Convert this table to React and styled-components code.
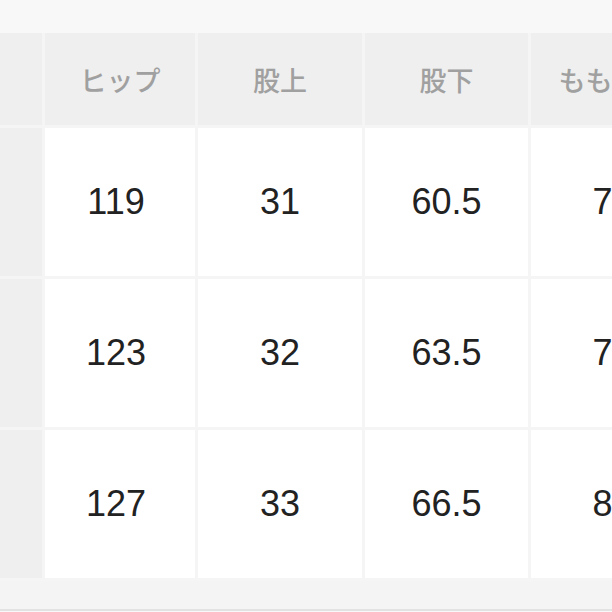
import styled, { createGlobalStyle } from "styled-components";

const GlobalStyle = createGlobalStyle`
  html, body {
    margin: 0;
    padding: 0;
    background: #f8f8f8;
  }
`;

const Page = styled.div`
  width: 612px;
  height: 612px;
  overflow: hidden;
  background: #f8f8f8;
  display: flex;
  flex-direction: column;
`;

const TopBand = styled.div`
  height: 33px;
  flex-shrink: 0;
  background: #f8f8f8;
`;

const Table = styled.div`
  display: grid;
  grid-template-columns: 42px 150px 164px 163px 163px;
  grid-template-rows: 92px repeat(3, 148px);
  gap: 3px;
  padding-bottom: 3px;
  background: #f5f5f5;
  flex-shrink: 0;
`;

const HeadCell = styled.div`
  background: #efefef;
  display: flex;
  align-items: center;
  justify-content: center;
  font-family: "Noto Sans CJK JP", "Noto Sans", sans-serif;
  font-size: 27px;
  font-weight: 500;
  color: #a0a0a0;
  white-space: nowrap;
  overflow: hidden;
`;

const LabelCell = styled.div`
  background: #efefef;
`;

const Cell = styled.div`
  background: #fff;
  display: flex;
  align-items: center;
  justify-content: center;
  padding-right: ${(p) => (p.$first ? "8px" : "0")};
  font-family: "Liberation Sans", "Noto Sans CJK JP", sans-serif;
  font-size: 36px;
  color: #222;
  white-space: nowrap;
  overflow: hidden;
`;

const BottomBand = styled.div`
  flex: 1;
  background: #f4f4f4;
  border-bottom: 2px solid #e2e2e2;
  max-height: 28px;
`;

const headers = ["ヒップ", "股上", "股下", "もも周り"];
const rows = [
  ["119", "31", "60.5", "72"],
  ["123", "32", "63.5", "75"],
  ["127", "33", "66.5", "80"],
];

export default function App() {
  return (
    <>
      <GlobalStyle />
      <Page>
        <TopBand />
        <Table>
          <HeadCell />
          {headers.map((h) => (
            <HeadCell key={h}>{h}</HeadCell>
          ))}
          {rows.map((r, i) => (
            <>
              <LabelCell key={`l${i}`} />
              {r.map((v, j) => (
                <Cell key={`${i}-${j}`} $first={j === 0}>
                  {v}
                </Cell>
              ))}
            </>
          ))}
        </Table>
        <BottomBand />
      </Page>
    </>
  );
}
